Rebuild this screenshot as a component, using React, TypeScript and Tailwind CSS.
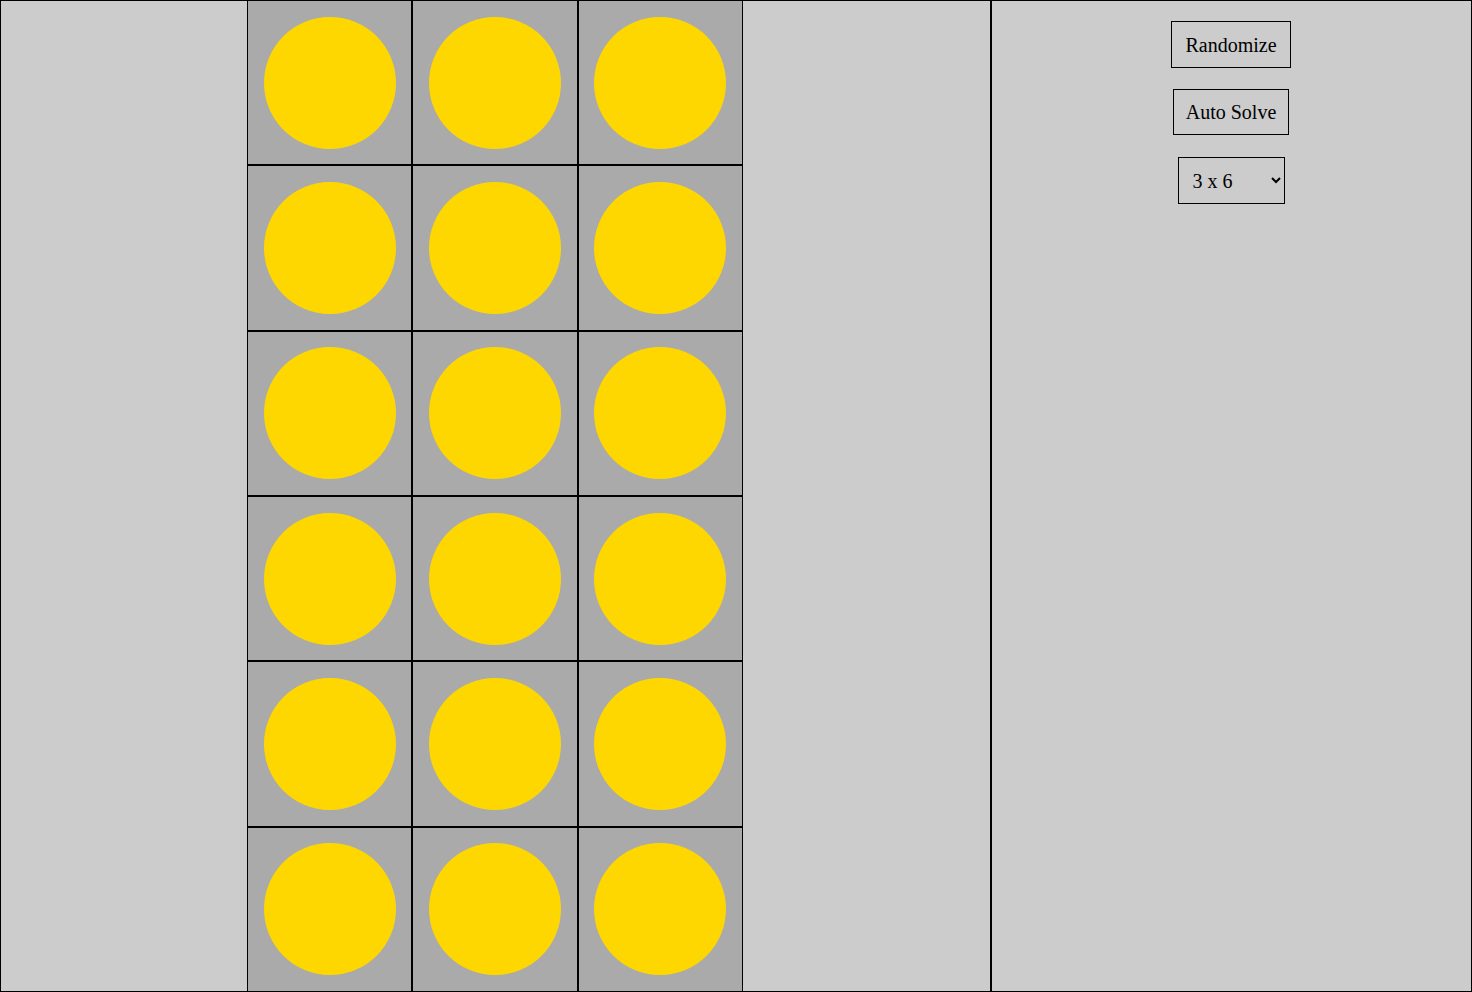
import React from "react";

export default function App() {
  const cells = Array.from({ length: 18 });
  return (
    <div className="flex h-[992px] w-[1472px] bg-[#cccccc]" style={{ fontFamily: '"Liberation Serif", "Times New Roman", serif' }}>
      <div className="flex h-[992px] w-[991px] border border-black bg-[#cccccc] pl-[246px]">
        <div className="-mt-px grid h-[992px] w-[496px] shrink-0 grid-cols-3 grid-rows-6">
          {cells.map((_, i) => (
            <div key={i} className="flex items-center justify-center border border-black bg-[#aaaaaa]">
              <div className="h-[132px] w-[132px] rounded-full bg-[#ffd700]" />
            </div>
          ))}
        </div>
      </div>
      <div className="flex h-[992px] flex-1 flex-col items-center border border-black bg-[#cccccc] pt-[20px]">
        <button className="-ml-px h-[47px] border border-black bg-transparent px-[13px] text-[20px] text-black">Randomize</button>
        <button className="-ml-px mt-[21px] h-[46px] border border-black bg-transparent px-[12px] text-[20px] text-black">Auto Solve</button>
        <select defaultValue="3x6" className="-ml-px mt-[22px] h-[47px] w-[107px] border border-black bg-transparent pl-[10px] text-[20px] text-black">
          <option value="3x3">3 x 3</option>
          <option value="3x6">3 x 6</option>
        </select>
      </div>
    </div>
  );
}
